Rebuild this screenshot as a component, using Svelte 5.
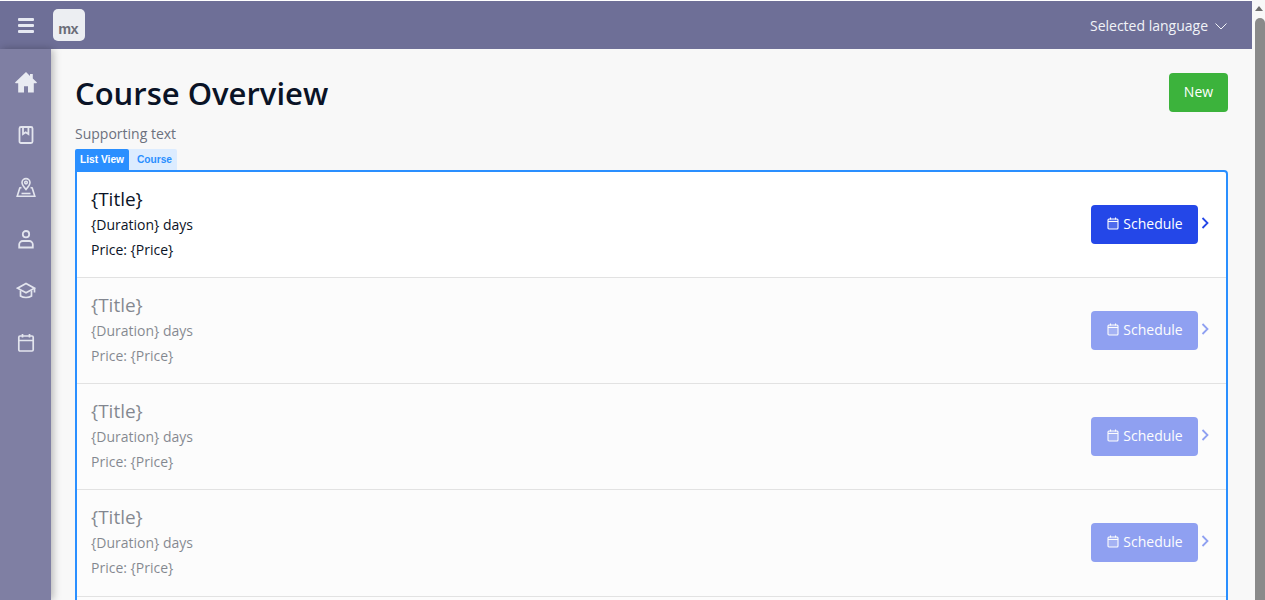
<script lang="ts">
  const menu = ["home", "book", "map", "user", "grad", "calendar"];
  const rows = [0, 1, 2, 3, 4];
</script>

<div class="window">
  <div class="page">
    <header class="topbar">
      <button class="burger" aria-label="Menu">
        <span></span><span></span><span></span>
      </button>
      <div class="logo">mx</div>
      <div class="language">
        Selected language
        <svg class="caret" width="14" height="14" viewBox="0 0 14 14" fill="none" stroke="currentColor" stroke-width="1">
          <path d="M1.500 4.500 7 10l5.500-5.500" />
        </svg>
      </div>
    </header>
    <div class="body">
      <nav class="sidebar">
        {#each menu as item}
          <div class="nav-item">
            {#if item === "home"}
              <svg class="home" width="24" height="24" viewBox="0 0 24 24" fill="#e9ebf2">
                <path d="M12 2 1 12.500l.7.800H4.200V22.500h5.800v-6.300h4v6.300h5.800V13.300h2.500l.7-.8L18.800 8.500V4h-2.800v1.900L12 2z" />
              </svg>
            {:else if item === "book"}
              <svg width="20" height="20" viewBox="0 0 20 20" fill="none" stroke="#e3e5ee" stroke-width="1.800">
                <rect x="3.500" y="2" width="13" height="16" rx="1.500" />
                <path d="M7 2.500v6.500l2.700-1.700 2.700 1.700V2.500" />
              </svg>
            {:else if item === "map"}
              <svg width="20" height="22" viewBox="0 0 20 22" fill="none" stroke="#e3e5ee" stroke-width="1.600">
                <path d="M10 13.500C7.600 10.800 6 8.700 6 6.600a4 4 0 0 1 8 0c0 2.100-1.600 4.200-4 6.900z" />
                <circle cx="10" cy="6.600" r="1.300" />
                <path d="M5.500 11.500 3.800 12 1.200 20.300h17.600L16.200 12l-1.700-.5" />
                <path d="M5.500 17.500h9" />
              </svg>
            {:else if item === "user"}
              <svg width="18" height="20" viewBox="0 0 18 20" fill="none" stroke="#e3e5ee" stroke-width="1.800">
                <circle cx="9" cy="5.200" r="3.200" />
                <path d="M2.200 18.500v-3a3.500 3.500 0 0 1 3.500-3.500h6.600a3.500 3.500 0 0 1 3.500 3.500v3z" />
              </svg>
            {:else if item === "grad"}
              <svg width="20" height="18" viewBox="0 0 20 18" fill="none" stroke="#e3e5ee" stroke-width="1.700">
                <path d="M10 1.500 1.500 6.200 10 10.800l8.500-4.600z" />
                <path d="M4.500 8.500v5.500c1.500 1 3.300 1.500 5.500 1.500s4-.5 5.500-1.500V8.500" />
                <path d="M18.500 6.500v4" />
              </svg>
            {:else}
              <svg width="18" height="20" viewBox="0 0 18 20" fill="none" stroke="#e3e5ee" stroke-width="1.700">
                <rect x="1.800" y="3" width="14.400" height="15" rx="1.200" />
                <path d="M1.800 7.500h14.400M5.500 1v3.500M12.500 1v3.500" />
              </svg>
            {/if}
          </div>
        {/each}
      </nav>
      <main class="content">
        <div class="heading">
          <h1>Course Overview</h1>
          <button class="new">New</button>
        </div>
        <p class="supporting">Supporting text</p>
        <div class="tabs">
          <span class="tab-name">List View</span>
          <span class="tab-entity">Course</span>
        </div>
        <div class="list">
          {#each rows as row}
            <div class="row" class:dim={row > 0}>
              <div class="info">
                <div class="title">{"{Title}"}</div>
                <div class="line">{"{Duration}"} days</div>
                <div class="line">Price: {"{Price}"}</div>
              </div>
              <div class="actions">
                <button class="schedule">
                  <svg width="12" height="13" viewBox="0 0 12 13" fill="none" stroke="currentColor" stroke-width="1.100">
                    <rect x="1" y="2" width="10" height="10" rx="1" fill="currentColor" fill-opacity="0.2" />
                    <path d="M1 4.500h10M3.500 .5v2M8.500 .5v2" />
                  </svg>
                  Schedule
                </button>
                <svg class="chevron" width="8" height="12" viewBox="0 0 8 12" fill="none" stroke="#2447e8" stroke-width="1.800">
                  <path d="M1.500 1 6.500 6l-5 5" />
                </svg>
              </div>
            </div>
          {/each}
        </div>
      </main>
    </div>
  </div>
  <div class="scrollbar">
    <div class="arrow"></div>
    <div class="thumb"></div>
  </div>
</div>

<style>
  :global(body) {
    margin: 0;
    overflow: hidden;
    background: #fff;
  }
  button {
    font-family: inherit;
    border: none;
    cursor: pointer;
  }
  .window {
    display: flex;
    height: 600px;
    overflow: hidden;
    font-family: "Open Sans", sans-serif;
    color: #0a1326;
  }
  .page {
    width: 1252px;
    display: flex;
    flex-direction: column;
    flex-shrink: 0;
  }
  .topbar {
    height: 48px;
    margin-top: 1px;
    flex-shrink: 0;
    background: #6e6f97;
    display: flex;
    align-items: center;
    color: #f1f3f7;
  }
  .burger {
    width: 51px;
    height: 48px;
    padding: 0 18px;
    background: none;
    display: flex;
    flex-direction: column;
    justify-content: center;
    gap: 3px;
  }
  .burger span {
    display: block;
    width: 16px;
    height: 3px;
    border-radius: 1px;
    background: #e6e9f2;
  }
  .logo {
    width: 32px;
    height: 32px;
    margin: -1px 0 0 2px;
    border-radius: 5px;
    background: #eceef2;
    color: #6b6d78;
    font: bold 14.500px/1 "Liberation Sans", sans-serif;
    display: flex;
    align-items: flex-end;
    justify-content: center;
    padding: 0 2px 4px 0;
    box-sizing: border-box;
    letter-spacing: -0.8px;
  }
  .language {
    margin-left: auto;
    margin-right: 24px;
    font-size: 14px;
    display: flex;
    align-items: center;
    gap: 6px;
  }
  .caret {
    position: relative;
    top: 1px;
  }
  .body {
    flex: 1;
    display: flex;
    min-height: 0;
  }
  .sidebar {
    width: 51px;
    flex-shrink: 0;
    background: #7f7fa3;
    box-shadow: 2px 0 8px rgba(0, 0, 0, 0.28);
    position: relative;
    padding-top: 16px;
    box-sizing: border-box;
    display: flex;
    flex-direction: column;
    gap: 17px;
  }
  .nav-item {
    height: 35px;
    display: flex;
    align-items: center;
    justify-content: center;
  }
  .home {
    position: relative;
    top: -1px;
  }
  .content {
    flex: 1;
    min-width: 0;
    background: #f8f8f8;
    padding: 24px 24px 0;
    overflow: hidden;
  }
  .heading {
    display: flex;
    justify-content: space-between;
    align-items: flex-start;
    height: 52px;
  }
  h1 {
    margin: 0;
    font-size: 31px;
    line-height: 41px;
    font-weight: 600;
  }
  .new {
    width: 59px;
    height: 39px;
    padding: 0 0 2px;
    border-radius: 4px;
    background: #3cb33c;
    color: #fff;
    font-size: 14px;
    font-weight: 500;
  }
  .supporting {
    margin: 0;
    font-size: 14px;
    line-height: 18px;
    color: #6c717e;
    height: 24px;
  }
  .tabs {
    display: flex;
    height: 21px;
    font: bold 10.200px/21px "Liberation Sans", sans-serif;
  }
  .tab-name {
    width: 54px;
    text-align: center;
    color: #fff;
    background: #2a8fff;
    border-radius: 2px 2px 0 0;
  }
  .tab-entity {
    width: 45px;
    padding-left: 3px;
    text-align: center;
    color: #2a8fff;
    background: #dcecff;
    border-radius: 0 2px 0 0;
  }
  .list {
    border: 2px solid #2a8fff;
    border-radius: 0 4px 0 0;
    background: #fff;
  }
  .row {
    height: 106.150px;
    box-sizing: border-box;
    border-bottom: 1px solid #e2e2e2;
    padding: 0 17px 1px 14px;
    display: flex;
    align-items: center;
    justify-content: space-between;
  }
  .row.dim {
    background: #fcfcfc;
  }
  .row.dim > * {
    opacity: 0.5;
  }
  .info {
    display: flex;
    flex-direction: column;
  }
  .title {
    font-size: 19px;
    line-height: 25px;
    font-weight: 500;
  }
  .line {
    font-size: 14px;
    line-height: 25px;
  }
  .actions {
    display: flex;
    align-items: center;
    gap: 3px;
  }
  .schedule {
    width: 107px;
    height: 39px;
    padding: 0 0 1px 1px;
    border-radius: 4px;
    background: #2447e8;
    color: #fff;
    font-size: 14px;
    display: flex;
    align-items: center;
    justify-content: center;
    gap: 4px;
  }
  .chevron {
    position: relative;
    top: -1px;
  }
  .scrollbar {
    flex: 1;
    background: #f8f8f8;
    position: relative;
  }
  .arrow {
    position: absolute;
    left: 3px;
    top: 6px;
    border-left: 4px solid transparent;
    border-right: 4px solid transparent;
    border-bottom: 5px solid #6e6e6e;
  }
  .thumb {
    position: absolute;
    left: 3px;
    right: 0;
    top: 18px;
    bottom: 0;
    border-radius: 5px 5px 0 0;
    background: #8a8a8a;
  }
</style>
